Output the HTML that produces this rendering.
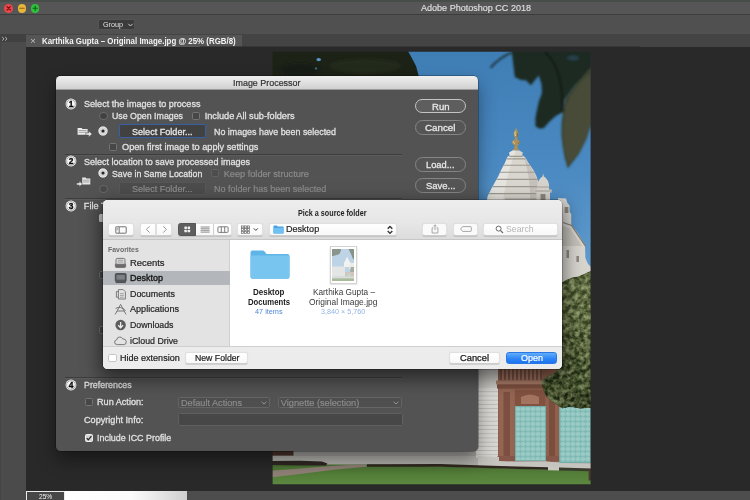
<!DOCTYPE html>
<html><head><meta charset="utf-8"><title>Adobe Photoshop CC 2018</title>
<style>
html,body{margin:0;padding:0;}
body{width:750px;height:500px;overflow:hidden;background:#292929;position:relative;font-family:"Liberation Sans", sans-serif;}
#root{position:absolute;left:0;top:0;width:750px;height:500px;overflow:hidden;}
#root div,#root span.t,#root svg{position:absolute;box-sizing:border-box;}
span.t{white-space:nowrap;transform-origin:0 50%;font-family:"Liberation Sans", sans-serif;}
#root{will-change:transform;}

</style></head><body><div id="root">
<div style="left:0px;top:0px;width:750px;height:2px;background:#474e4a;"></div>
<div style="left:0px;top:2px;width:750px;height:12px;background:#565656;"></div>
<div style="left:0px;top:14px;width:750px;height:1px;background:#3d3d3d;"></div>
<div style="left:0px;top:15px;width:750px;height:19px;background:#505050;"></div>
<div style="left:0px;top:34px;width:750px;height:12.5px;background:#444444;"></div>
<div style="left:4.3999999999999995px;top:4.000000000000001px;width:8.6px;height:8.6px;border-radius:50%;background:#e8484a;"></div>
<div style="left:17.7px;top:4.000000000000001px;width:8.6px;height:8.6px;border-radius:50%;background:#e6b53a;"></div>
<div style="left:30.900000000000002px;top:4.000000000000001px;width:8.6px;height:8.6px;border-radius:50%;background:#2fc23c;"></div>
<svg style="left:0;top:0" width="45" height="14" viewBox="0 0 45 14"><g stroke-linecap="round" fill="none" stroke-width="1.1"><path d="M7,6.6 L10.4,10 M10.4,6.6 L7,10" stroke="#7a0c10"/><path d="M19.8,8.3 H24.2" stroke="#8a6410"/><path d="M33,8.3 H37.4 M35.2,6.1 V10.5" stroke="#0d6412"/></g></svg>
<span class="t" style="left:420.70px;top:2.22px;font-size:9.5px;line-height:12px;color:#dedede;font-weight:400;transform:scaleX(0.9510);-webkit-text-stroke:0.2px #dedede;">Adobe Photoshop CC 2018</span>
<div style="left:97.8px;top:19.4px;width:37.2px;height:10.8px;background:#3b3b3b;border:1px solid #555;border-radius:2px;"></div>
<span class="t" style="left:102.80px;top:20.40px;font-size:7.5px;line-height:9px;color:#e2e2e2;font-weight:400;transform:scaleX(0.9588);">Group</span>
<svg style="left:127px;top:22px" width="7" height="6" viewBox="0 0 7 6"><path d="M1.3,1.8 L3.5,4 L5.7,1.8" stroke="#dcdcdc" stroke-width="0.9" fill="none"/></svg>
<div style="left:0px;top:34px;width:25.7px;height:466px;background:#4b4b4b;"></div>
<div style="left:0px;top:34px;width:25.7px;height:7.8px;background:#404040;"></div>
<div style="left:0px;top:34px;width:1px;height:466px;background:#444;"></div>
<svg style="left:1px;top:35.5px" width="8" height="6" viewBox="0 0 8 6"><path d="M1.2,1 L3,2.8 L1.2,4.6 M4.2,1 L6,2.8 L4.2,4.6" fill="none" stroke="#c6c6c6" stroke-width="0.9"/></svg>
<div style="left:25.7px;top:34.5px;width:216.3px;height:12px;background:#555555;"></div>
<span class="t" style="left:30.30px;top:34.72px;font-size:9.5px;line-height:12px;color:#c4c4c4;font-weight:400;">×</span>
<span class="t" style="left:42.00px;top:34.52px;font-size:9.4px;line-height:12px;color:#f4f4f4;font-weight:700;transform:scaleX(0.8421);">Karthika Gupta – Original Image.jpg @ 25% (RGB/8)</span>

<svg style="left:0;top:0" width="750" height="500" viewBox="0 0 750 500">
<defs>
<clipPath id="pc"><rect x="272.5" y="51.7" width="318" height="432.6"/></clipPath>
<linearGradient id="sky" x1="0" y1="52" x2="0" y2="280" gradientUnits="userSpaceOnUse">
 <stop offset="0" stop-color="#3f7db5"/><stop offset="0.5" stop-color="#4a89c1"/><stop offset="1" stop-color="#629dcf"/></linearGradient>
<linearGradient id="lawn" x1="0" y1="465" x2="0" y2="485" gradientUnits="userSpaceOnUse">
 <stop offset="0" stop-color="#4a7032"/><stop offset="0.5" stop-color="#55803a"/><stop offset="1" stop-color="#5c8840"/></linearGradient>
<filter id="b1" x="-10%" y="-10%" width="120%" height="120%"><feGaussianBlur stdDeviation="0.7"/></filter>
<filter id="bL" x="-10%" y="-10%" width="120%" height="120%"><feGaussianBlur stdDeviation="1.25"/></filter>
<filter id="leafy" x="-5%" y="-5%" width="110%" height="110%" color-interpolation-filters="sRGB">
 <feTurbulence type="fractalNoise" baseFrequency="0.2" numOctaves="3" seed="11" result="n"/>
 <feColorMatrix in="n" type="matrix" values="2.3 0 0 0 -0.72  2.3 0 0 0 -0.72  1.9 0 0 0 -0.62  0 0 0 0 1" result="g"/>
 <feComposite in="SourceGraphic" in2="g" operator="arithmetic" k1="0" k2="0.85" k3="0.36" k4="-0.07" result="m"/>
 <feComposite in="m" in2="SourceGraphic" operator="in" result="c"/>
 <feGaussianBlur in="c" stdDeviation="0.6"/>
</filter>
<filter id="b2" x="-10%" y="-10%" width="120%" height="120%"><feGaussianBlur stdDeviation="1.6"/></filter>
<pattern id="teal" x="515.5" y="406.5" width="5" height="5" patternUnits="userSpaceOnUse">
 <rect width="5" height="5" fill="#7fb9b4"/><circle cx="2.5" cy="2.5" r="1.8" fill="#bfe2dd"/><circle cx="2.5" cy="2.5" r="0.9" fill="#74aea9"/></pattern>
<pattern id="wall" x="478" y="388" width="4" height="4.2" patternUnits="userSpaceOnUse">
 <rect width="4" height="4.2" fill="#d9d7d3"/><rect y="3.3" width="4" height="0.9" fill="#bcb9b4"/></pattern>
</defs>
<g>
 <rect x="272" y="51" width="320" height="434" fill="url(#sky)"/>
 <!-- top-left dark foliage -->
 <g filter="url(#b1)">
 <path d="M262,47 L405.5,47 Q411,56 416,66 Q420,78 421,90 Q421,110 414,130 L262,140 Z" fill="#1b2119"/>
 </g>
 <g filter="url(#b2)"><ellipse cx="365" cy="66" rx="36" ry="7" fill="#232a1b"/><ellipse cx="300" cy="70" rx="20" ry="6" fill="#161b15"/></g>
 <g filter="url(#b1)"><ellipse cx="318.7" cy="59.6" rx="2.3" ry="1.6" fill="#5a95c8"/><ellipse cx="316" cy="68.4" rx="1.2" ry="1.2" fill="#41627a"/></g>
 <!-- temple -->
 <g filter="url(#b1)">
  <path d="M516,127.8 Q516.9,129.6 517.6,131 Q518.9,133 518.2,135.2 Q517.6,137 517,138.2 Q517,139.4 518.2,139.9 Q520.3,140.6 520.1,142.4 Q519.9,144.3 517.9,144.9 Q517.3,145.6 517.5,146.8 Q518,149 519.6,150.6 L512.4,150.6 Q514,149 514.5,146.8 Q514.7,145.6 514.1,144.9 Q512.1,144.3 511.9,142.4 Q511.7,140.6 513.8,139.9 Q515,139.4 515,138.2 Q514.4,137 513.8,135.2 Q513.1,133 514.4,131 Q515.1,129.6 516,127.8 Z" fill="#a8915a"/>
  <path d="M515.3,131.5 Q514.6,133.6 515.4,136 M513.6,141.4 Q513.4,142.8 514.6,143.6" stroke="#e3d6a2" stroke-width="1" fill="none"/>
  <path d="M517.6,133 Q517.8,135 517,137 M519,141.5 Q519.2,143 518,144" stroke="#6e5a30" stroke-width="0.8" fill="none" opacity="0.8"/>
  <path d="M512.6,150.4 L519.4,150.4 L522.8,152.6 L522.2,155.6 L525,157 L528.6,163 L533.4,170 L536.4,176 L538.6,183 L539.6,190 L540.4,196 L540.6,202 L486.6,202 L487.8,196 L490.8,190 L494.6,183 L498.5,176 L501.2,170 L504.9,163 L507.4,157 L509.8,155.6 L509.2,152.6 Z" fill="#d9d6cf"/>
  <path d="M512.6,150.4 L509.2,152.6 L509.8,155.6 L507.4,157 L504.9,163 L501.2,170 L498.5,176 L494.6,183 L490.8,190 L487.8,196 L486.6,202 L503,202 Q506,176 516,150.4Z" fill="#eeece7" opacity="0.6"/>
  <path d="M528,163 L532.4,170 L535.6,176 L537.9,183 L538.8,190 L539.8,196 L540,202 L530,202 Q531,180 524,157Z" fill="#b7b3ab" opacity="0.55"/>
  <path d="M509.4,156.3 H522.6 M506.5,158.8 H525.6 M503.3,165.2 H530 M499.8,172.2 H534.4 M496.4,179.4 H537.4 M492.8,186.6 H539 M489.3,193.6 H540" stroke="#9d9990" stroke-width="1.15" fill="none"/>
  <path d="M505,199 H538" stroke="#8f8b83" stroke-width="1" fill="none" opacity="0.7"/>
  <path d="M543.2,173.6 L543.9,176.4 Q547.6,178.6 548.8,183.6 Q549.4,186.6 549,189.4 L551.6,189.4 L551.6,192.4 L550,192.4 L550,202 L536.4,202 L536.4,192.4 L534.8,192.4 L534.8,189.4 L537.4,189.4 Q537,186.6 537.6,183.6 Q538.8,178.6 542.5,176.4 Z" fill="#d6d3cc"/><path d="M537.6,187 H549 M535,191 H551.4" stroke="#9d9990" stroke-width="0.9"/>
  <rect x="540.5" y="194" width="5" height="7" fill="#8c8880"/>
 </g>
 <!-- right leaves -->
 <g filter="url(#bL)">
  <path d="M490.5,67.8 Q499,58 511.6,52.5" stroke="#1c2a22" stroke-width="1.6" fill="none"/>
  <path d="M511.6,50 L513,62 L514.8,77 L521,80 L526,80.2 L530.8,85.2 L535,80 L538.8,75.4 L541.5,84 L542,93 L539,101 L537.2,109 L535.4,118 L535.6,126.6 L539.5,128.6 L543.6,128.2 L550,121 L556.4,115.4 L562.9,112.2 L564,100 L575,85 L592,70 L592,50 Z" fill="#1d2a21"/>
  <path d="M562.9,112.2 L561.6,123 L561.3,134.6 L562.6,146 L564.5,157 L567.7,168.5 L573.5,161 L578.9,153.9 L583,146 L586.9,137.9 L589,131 L592,124 L592,66 L576,84 L565,99 Z" fill="#3b4331"/>
  <path d="M566,106 Q572,92 583,80 L592,72 L592,120 L587,136 L579,152 L568.5,165 L564.5,150 L563,130 Z" fill="#4a4f3a" opacity="0.8"/>
  <path d="M545,52 Q556,62 560,80 Q563,95 562.5,112" stroke="#111a14" stroke-width="2.5" fill="none" opacity="0.7"/>
  <ellipse cx="573" cy="58" rx="6" ry="2.5" fill="#2b4a5e" opacity="0.7"/>
 </g>
 <!-- right strip behind picker: palace + tree -->
 <g filter="url(#b1)">
  <path d="M558,198 L566,198.5 L567.4,203 L569.6,205.5 L569.6,212 L571.2,214 L571.2,225 L578,233.5 L585,245 L585.4,258 L588,264 L592,268 L592,284 L558,284 Z" fill="#d8d5cf"/>
  <path d="M563,222.5 L571.5,225.5 L585.6,246.3" stroke="#857e72" stroke-width="1.3" fill="none"/>
  <path d="M562,226 L570,228 L582,246 L562,246Z" fill="#bdb9b1" opacity="0.7"/>
  <path d="M564.6,207 H568.4 V213 H564.6Z M576.4,256 H579 V262 H576.4Z M566.5,250 H569 V258 H566.5Z" fill="#8c887f"/>
  
 </g>
 <!-- pavement base -->
 <path d="M268,449 L592,449 L592,470 L268,470Z" fill="#b3b2ae"/>
 <path d="M268,451 L478,451 L478,456 L268,456Z" fill="#a4a3a0"/>
 <!-- lower building -->
 <rect x="476" y="366" width="24" height="24" fill="#cfcdc9"/>
 <rect x="476" y="388" width="23" height="69.5" fill="url(#wall)"/>
 <g filter="url(#b1)">
  <rect x="498" y="366" width="62" height="96" fill="#8d5f4c"/>
  <rect x="500" y="368" width="42" height="12" fill="#7a5040"/>
  <path d="M503,368 V380 M507,368 V380 M511,368 V380 M515,368 V380 M519,368 V380 M523,368 V380 M527,368 V380 M531,368 V380 M535,368 V380 M539,368 V380" stroke="#b08a78" stroke-width="1.2"/>
  <rect x="496" y="380.5" width="50" height="4" fill="#a87a66"/>
  <rect x="497" y="384.5" width="48" height="4" fill="#7c4f3f"/>
  <rect x="514.5" y="390" width="31" height="16.5" fill="#82513f"/>
  <path d="M521,397 Q530,392 539,397 L539,404 L521,404Z" fill="#a37560"/>
  <rect x="499" y="389" width="15.7" height="71" fill="#946552"/>
  <rect x="503.5" y="392" width="6.5" height="64" fill="#7d5040"/>
  <rect x="545.4" y="389" width="13.5" height="71" fill="#8f604d"/>
  <rect x="549" y="392" width="6" height="64" fill="#7a4e3e"/>
  <rect x="497.5" y="456" width="18" height="5" fill="#86574a"/>
  <rect x="544" y="456" width="16" height="5" fill="#86574a"/>
 </g>
 <rect x="515.5" y="406.5" width="30" height="54.3" fill="url(#teal)"/>
 <rect x="515.5" y="406.5" width="30" height="54.3" fill="none" stroke="#74aeaa" stroke-width="1"/>
 <rect x="559.7" y="407" width="31" height="55.5" fill="url(#teal)"/>
 <rect x="559.7" y="407" width="31" height="55.5" fill="none" stroke="#74aeaa" stroke-width="1"/>
 <!-- tree -->
 <g filter="url(#leafy)">
  <path d="M556,288 L561,283 L566,280 L572,277.5 L578,276.5 L584,274 L588,272 L594,270 L594,372 L556,372 Z" fill="#56643f"/>
  <path d="M556,330 L594,330 L594,372 L556,372Z" fill="#4a5836"/>
  <path d="M562,358 L556,372 L548,376 L541,381 L543,389 L546,396 L551,401 L557,405 L562,408.5 L570,406.5 L580,408.5 L594,407.5 L594,358Z" fill="#3c4a2c"/>
  <path d="M556,392 L562,408.5 L570,406.5 L580,408.5 L594,407.5 L594,392Z" fill="#303c24"/>
 </g>
 <!-- pavement + lawn -->
 <path d="M478,456 L499,457 L499,461 L516,461.6 L545.6,461.2 L560,463 L592,464 L592,470 L478,466Z" fill="#c6c4be"/>
 <!-- lawn -->
 <path d="M268,465 L320,464.6 L367,464.6 L440,466.6 L548,469.6 L592,471 L592,486 L268,486Z" fill="url(#lawn)"/>
 <!-- left hedge, path, right hedge -->
 <path d="M268,461 L300,460.8 L322,461.6 L327.4,463.4 L326,465.6 L300,465.4 L268,465Z" fill="#2f2722"/>
 <path d="M268,471 L300,468.4 L330,466 L365,464.3 L367,466.8 L336,469.6 L300,474 L268,477.8Z" fill="#8f8076"/>
 <path d="M367,464.2 L440,464 L500,466 L548,467.2 L548,469.8 L500,468.6 L440,466.7 L367,466.8Z" fill="#30291f"/>
 <path d="M548,466.6 L559,467 L559,470.6 L548,470.2Z" fill="#c9c8c0"/>
 <path d="M559,467.6 L592,468.6 L592,471.2 L559,470.4Z" fill="#3a3a2c"/>
 <rect x="272" y="451" width="21.5" height="4.6" fill="#4b332b"/>
 <rect x="588.6" y="469.5" width="3" height="11" fill="#4a3c30"/>
</g>
<path d="M200,46.5 H640 V490.5 H200Z M272.6,51.7 V484.3 H590.6 V51.7Z" fill="#292929" fill-rule="evenodd"/>
</svg>
<div style="left:25.7px;top:490.5px;width:725px;height:10px;background:#4d4d4d;"></div>
<div style="left:64px;top:490.5px;width:122.7px;height:10px;background:linear-gradient(90deg,#ffffff 0%,#fbfbfb 55%,#cfcfcf 100%);"></div>
<div style="left:26px;top:491px;width:38.5px;height:10px;background:#474747;border:1px solid #ececec;"></div>
<span class="t" style="left:39.00px;top:491.61px;font-size:7.2px;line-height:9px;color:#f4f4f4;font-weight:400;transform:scaleX(0.9173);">25%</span>
<div style="left:55.6px;top:76px;width:422.2px;height:375px;background:#535353;border-radius:4.5px;box-shadow:0 9px 18px 0px rgba(0,0,0,0.42),0 0 0 0.5px rgba(0,0,0,0.5);"></div>
<div style="left:55.6px;top:76px;width:422.2px;height:13.8px;background:linear-gradient(#efefef,#e2e2e2 45%,#d0d0d0);border-radius:4.5px 4.5px 0 0;border-bottom:1px solid #9a9a9a;"></div>
<span class="t" style="left:233.05px;top:77.23px;font-size:9.2px;line-height:12px;color:#303030;font-weight:400;transform:scaleX(0.9719);-webkit-text-stroke:0.2px #303030;">Image Processor</span>
<svg style="left:64.8px;top:97.7px" width="12" height="12" viewBox="0 0 12 12"><circle cx="6" cy="6" r="5.4" fill="#fafafa"/><circle cx="6" cy="6" r="4.35" fill="none" stroke="#444" stroke-width="0.45"/><text x="6.05" y="8.95" text-anchor="middle" font-family="Liberation Sans" font-weight="700" font-size="8.4" fill="#0c0c0c" stroke="#0c0c0c" stroke-width="0.35">1</text></svg>
<span class="t" style="left:83.80px;top:98.03px;font-size:9.2px;line-height:12px;color:#e2e2e2;font-weight:400;transform:scaleX(0.9875);-webkit-text-stroke:0.28px #e2e2e2;">Select the images to process</span>
<div style="left:99.10000000000001px;top:111.5px;width:8.6px;height:8.6px;border-radius:50%;background:#414141;border:1px solid #6c6c6c;"></div>
<span class="t" style="left:112.20px;top:109.93px;font-size:9.2px;line-height:12px;color:#e2e2e2;font-weight:400;transform:scaleX(0.9586);-webkit-text-stroke:0.28px #e2e2e2;">Use Open Images</span>
<div style="left:191.5px;top:111.8px;width:8px;height:8px;border-radius:1.5px;background:#474747;border:1px solid #747474;"></div>
<span class="t" style="left:204.70px;top:109.93px;font-size:9.2px;line-height:12px;color:#e2e2e2;font-weight:400;-webkit-text-stroke:0.28px #e2e2e2;">Include All sub-folders</span>
<svg style="left:76.5px;top:126.6px" width="16" height="10" viewBox="0 0 16 10"><path d="M0.6,0.9 H4.6 L5.5,1.9 H10.6 V7.8 H0.6Z" fill="#ececec"/><path d="M1.5,3.5 H9.7 M1.5,5.3 H9.7" stroke="#6a6a6a" stroke-width="0.55"/><path d="M8.8,5.9 H11.6 V4.1 L15.2,7 L11.6,9.9 V8.1 H8.8Z" fill="#ececec" stroke="#535353" stroke-width="0.55"/></svg>
<svg style="left:97.4px;top:125.19999999999999px" width="12" height="12" viewBox="0 0 12 12"><circle cx="6" cy="6" r="4.5" fill="#d4d4d4"/><circle cx="6" cy="6" r="4.1" fill="none" stroke="#ececec" stroke-width="0.7"/><circle cx="6" cy="6" r="1.55" fill="#242424"/></svg>
<div style="left:119px;top:124px;width:87.2px;height:14.4px;background:#414141;border:1px solid #3a5f9c;border-radius:2px;box-shadow:0 0 0 0.5px rgba(50,90,150,0.4);"></div>
<span class="t" style="left:132.45px;top:125.83px;font-size:9.2px;line-height:12px;color:#f0f0f0;font-weight:400;transform:scaleX(0.9873);-webkit-text-stroke:0.28px #e2e2e2;">Select Folder...</span>
<span class="t" style="left:214.00px;top:125.53px;font-size:9.2px;line-height:12px;color:#e2e2e2;font-weight:400;transform:scaleX(0.9671);-webkit-text-stroke:0.28px #e2e2e2;">No images have been selected</span>
<div style="left:109.4px;top:143.2px;width:8px;height:8px;border-radius:1.5px;background:#474747;border:1px solid #747474;"></div>
<span class="t" style="left:122.00px;top:140.73px;font-size:9.2px;line-height:12px;color:#e2e2e2;font-weight:400;-webkit-text-stroke:0.28px #e2e2e2;">Open first image to apply settings</span>
<div style="left:65px;top:153.5px;width:337.3px;height:1px;background:#3d3d3d;"></div>
<div style="left:65px;top:154.5px;width:337.3px;height:0.6px;background:#5c5c5c;"></div>
<svg style="left:64.8px;top:155.3px" width="12" height="12" viewBox="0 0 12 12"><circle cx="6" cy="6" r="5.4" fill="#fafafa"/><circle cx="6" cy="6" r="4.35" fill="none" stroke="#444" stroke-width="0.45"/><text x="6.05" y="8.95" text-anchor="middle" font-family="Liberation Sans" font-weight="700" font-size="8.4" fill="#0c0c0c" stroke="#0c0c0c" stroke-width="0.35">2</text></svg>
<span class="t" style="left:83.80px;top:155.73px;font-size:9.2px;line-height:12px;color:#e2e2e2;font-weight:400;transform:scaleX(0.9820);-webkit-text-stroke:0.28px #e2e2e2;">Select location to save processed images</span>
<svg style="left:97.4px;top:167.4px" width="12" height="12" viewBox="0 0 12 12"><circle cx="6" cy="6" r="4.5" fill="#d4d4d4"/><circle cx="6" cy="6" r="4.1" fill="none" stroke="#ececec" stroke-width="0.7"/><circle cx="6" cy="6" r="1.55" fill="#242424"/></svg>
<span class="t" style="left:112.20px;top:167.53px;font-size:9.2px;line-height:12px;color:#e2e2e2;font-weight:400;transform:scaleX(0.9556);-webkit-text-stroke:0.28px #e2e2e2;">Save in Same Location</span>
<div style="left:210.9px;top:169.4px;width:8px;height:8px;border-radius:1.5px;background:#4d4d4d;border:1px solid #626262;"></div>
<span class="t" style="left:223.70px;top:167.63px;font-size:9.2px;line-height:12px;color:#8b8b8b;font-weight:400;-webkit-text-stroke:0.2px #8b8b8b;">Keep folder structure</span>
<svg style="left:75.5px;top:177.2px" width="15" height="10" viewBox="0 0 15 10"><path d="M6.2,0.6 H9.6 L10.4,1.6 H14.3 V7.6 H6.2Z" fill="#e8e8e8"/><path d="M7,3.2 H13.5 M7,5 H13.5" stroke="#6a6a6a" stroke-width="0.55"/><path d="M0.8,5.9 H3.3 V4.3 L6.5,6.9 L3.3,9.5 V7.9 H0.8Z" fill="#e8e8e8" stroke="#535353" stroke-width="0.4"/></svg>
<div style="left:99.10000000000001px;top:184.5px;width:8.6px;height:8.6px;border-radius:50%;background:#494949;border:1px solid #686868;"></div>
<div style="left:119px;top:182.4px;width:87.2px;height:12.8px;background:#4c4c4c;border:1px solid #575757;border-radius:2px;"></div>
<span class="t" style="left:132.45px;top:182.93px;font-size:9.2px;line-height:12px;color:#8e8e8e;font-weight:400;transform:scaleX(0.9873);-webkit-text-stroke:0.2px #8b8b8b;">Select Folder...</span>
<span class="t" style="left:214.00px;top:182.93px;font-size:9.2px;line-height:12px;color:#8b8b8b;font-weight:400;transform:scaleX(0.9823);-webkit-text-stroke:0.2px #8b8b8b;">No folder has been selected</span>
<div style="left:65px;top:197.5px;width:337.3px;height:1px;background:#3d3d3d;"></div>
<div style="left:65px;top:198.5px;width:337.3px;height:0.6px;background:#5c5c5c;"></div>
<svg style="left:64.8px;top:199.7px" width="12" height="12" viewBox="0 0 12 12"><circle cx="6" cy="6" r="5.4" fill="#fafafa"/><circle cx="6" cy="6" r="4.35" fill="none" stroke="#444" stroke-width="0.45"/><text x="6.05" y="8.95" text-anchor="middle" font-family="Liberation Sans" font-weight="700" font-size="8.4" fill="#0c0c0c" stroke="#0c0c0c" stroke-width="0.35">3</text></svg>
<span class="t" style="left:83.80px;top:199.63px;font-size:9.2px;line-height:12px;color:#e2e2e2;font-weight:400;-webkit-text-stroke:0.28px #e2e2e2;">File Type</span>
<div style="left:98.5px;top:213.6px;width:8px;height:8px;background:#cfcfcf;border-radius:1.5px;"></div>
<div style="left:98.5px;top:270.5px;width:8px;height:8px;border-radius:1.5px;background:#474747;border:1px solid #747474;"></div>
<div style="left:98.5px;top:325.5px;width:8px;height:8px;border-radius:1.5px;background:#474747;border:1px solid #747474;"></div>
<div style="left:65px;top:377.3px;width:337.3px;height:1px;background:#3d3d3d;"></div>
<div style="left:65px;top:378.3px;width:337.3px;height:0.6px;background:#5c5c5c;"></div>
<svg style="left:64.8px;top:379px" width="12" height="12" viewBox="0 0 12 12"><circle cx="6" cy="6" r="5.4" fill="#fafafa"/><circle cx="6" cy="6" r="4.35" fill="none" stroke="#444" stroke-width="0.45"/><text x="6.05" y="8.95" text-anchor="middle" font-family="Liberation Sans" font-weight="700" font-size="8.4" fill="#0c0c0c" stroke="#0c0c0c" stroke-width="0.35">4</text></svg>
<span class="t" style="left:84.00px;top:379.03px;font-size:9.2px;line-height:12px;color:#d2d2d2;font-weight:400;transform:scaleX(0.9627);-webkit-text-stroke:0.28px #e2e2e2;">Preferences</span>
<div style="left:85px;top:398.3px;width:8px;height:8px;border-radius:1.5px;background:#474747;border:1px solid #747474;"></div>
<span class="t" style="left:96.80px;top:396.43px;font-size:9.2px;line-height:12px;color:#e2e2e2;font-weight:400;transform:scaleX(0.9915);-webkit-text-stroke:0.28px #e2e2e2;">Run Action:</span>
<div style="left:177.7px;top:396.6px;width:92.4px;height:11.8px;background:#4f4f4f;border:1px solid #656565;border-radius:1.5px;"></div>
<span class="t" style="left:180.80px;top:396.53px;font-size:9.2px;line-height:12px;color:#8b8b8b;font-weight:400;transform:scaleX(0.9952);-webkit-text-stroke:0.2px #8b8b8b;">Default Actions</span>
<svg style="left:260px;top:399.5px" width="8" height="6" viewBox="0 0 8 6"><path d="M1.6,1.7 L4,4.1 L6.4,1.7" stroke="#9a9a9a" stroke-width="0.9" fill="none"/></svg>
<div style="left:277.7px;top:396.6px;width:124.2px;height:11.8px;background:#4f4f4f;border:1px solid #656565;border-radius:1.5px;"></div>
<span class="t" style="left:280.80px;top:396.53px;font-size:9.2px;line-height:12px;color:#8b8b8b;font-weight:400;-webkit-text-stroke:0.2px #8b8b8b;">Vignette (selection)</span>
<svg style="left:392px;top:399.5px" width="8" height="6" viewBox="0 0 8 6"><path d="M1.6,1.7 L4,4.1 L6.4,1.7" stroke="#9a9a9a" stroke-width="0.9" fill="none"/></svg>
<span class="t" style="left:84.00px;top:414.03px;font-size:9.2px;line-height:12px;color:#e2e2e2;font-weight:400;transform:scaleX(0.9922);-webkit-text-stroke:0.28px #e2e2e2;">Copyright Info:</span>
<div style="left:177.7px;top:413.2px;width:225px;height:12.6px;background:#474747;border:1px solid #5f5f5f;border-radius:1.5px;"></div>
<div style="left:85px;top:433.7px;width:8px;height:8px;border-radius:1.5px;background:#d4d4d4;border:0.8px solid #efefef;"></div>
<svg style="left:85px;top:433.7px" width="8" height="8" viewBox="0 0 8 8"><path d="M1.7,4.1 L3.3,5.8 L6.4,2.1" stroke="#262626" stroke-width="1.3" fill="none"/></svg>
<span class="t" style="left:96.80px;top:431.83px;font-size:9.2px;line-height:12px;color:#e2e2e2;font-weight:400;transform:scaleX(0.9699);-webkit-text-stroke:0.28px #e2e2e2;">Include ICC Profile</span>
<div style="left:415.3px;top:98.6px;width:50.4px;height:14.8px;border-radius:7.4px;border:1px solid #c4c4c4;background:#5e5e5e;"></div>
<span class="t" style="left:431.75px;top:100.93px;font-size:9.2px;line-height:12px;color:#f0f0f0;font-weight:400;transform:scaleX(1.0380);-webkit-text-stroke:0.28px #e2e2e2;">Run</span>
<div style="left:415.3px;top:119.8px;width:50.4px;height:14.8px;border-radius:7.4px;border:1px solid #858585;background:#555555;"></div>
<span class="t" style="left:425.25px;top:122.13px;font-size:9.2px;line-height:12px;color:#f0f0f0;font-weight:400;transform:scaleX(1.0661);-webkit-text-stroke:0.28px #e2e2e2;">Cancel</span>
<div style="left:415.3px;top:157.1px;width:50.4px;height:14.8px;border-radius:7.4px;border:1px solid #858585;background:#555555;"></div>
<span class="t" style="left:426.25px;top:159.43px;font-size:9.2px;line-height:12px;color:#f0f0f0;font-weight:400;transform:scaleX(1.0139);-webkit-text-stroke:0.28px #e2e2e2;">Load...</span>
<div style="left:415.3px;top:177.8px;width:50.4px;height:14.8px;border-radius:7.4px;border:1px solid #858585;background:#555555;"></div>
<span class="t" style="left:425.75px;top:180.13px;font-size:9.2px;line-height:12px;color:#f0f0f0;font-weight:400;transform:scaleX(1.0311);-webkit-text-stroke:0.28px #e2e2e2;">Save...</span>
<div style="left:102.7px;top:200px;width:459.3px;height:168.8px;background:#ececec;border-radius:4.5px;box-shadow:0 7px 18px 3px rgba(0,0,0,0.5),0 0 0 0.5px rgba(0,0,0,0.4);"></div>
<div style="left:102.7px;top:200px;width:459.3px;height:39.5px;background:linear-gradient(#ededed,#e6e6e6 60%,#dcdcdc);border-radius:4.5px 4.5px 0 0;border-bottom:1px solid #c6c6c6;"></div>
<span class="t" style="left:298.15px;top:208.26px;font-size:8.4px;line-height:11px;color:#1e1e1e;font-weight:700;transform:scaleX(0.8605);">Pick a source folder</span>
<div style="left:107.5px;top:222.8px;width:26.5px;height:12.8px;background:linear-gradient(#ffffff,#f8f8f8);border:0.8px solid #e0e0e0;border-bottom-color:#cdcdcd;border-radius:2.8px;box-shadow:0 0.5px 0.8px rgba(0,0,0,0.12);"></div>
<svg style="left:115px;top:225.5px" width="12" height="8" viewBox="0 0 12 8"><rect x="0.8" y="0.8" width="10.4" height="6.4" rx="0.4" fill="none" stroke="#6a6a6a" stroke-width="0.95"/><path d="M4.2,1 V7" stroke="#6a6a6a" stroke-width="0.9"/><path d="M1.7,2.4 H3.3 M1.7,3.7 H3.3" stroke="#6a6a6a" stroke-width="0.6"/></svg>
<div style="left:139.6px;top:222.8px;width:16.3px;height:12.8px;background:linear-gradient(#ffffff,#f8f8f8);border:0.8px solid #e0e0e0;border-bottom-color:#cdcdcd;border-radius:2.8px;box-shadow:0 0.5px 0.8px rgba(0,0,0,0.12);border-radius:2.6px 0 0 2.6px;"></div>
<div style="left:156.2px;top:222.8px;width:16.3px;height:12.8px;background:linear-gradient(#ffffff,#f8f8f8);border:0.8px solid #e0e0e0;border-bottom-color:#cdcdcd;border-radius:2.8px;box-shadow:0 0.5px 0.8px rgba(0,0,0,0.12);border-radius:0 2.6px 2.6px 0;"></div>
<svg style="left:139.6px;top:222.8px" width="33" height="13" viewBox="0 0 33 13"><path d="M9.6,3.2 L6.4,6.4 L9.6,9.6 M23.2,3.2 L26.4,6.4 L23.2,9.6" fill="none" stroke="#8c8c8c" stroke-width="0.9"/></svg>
<div style="left:177.5px;top:222.8px;width:54px;height:12.8px;background:linear-gradient(#ffffff,#f8f8f8);border:0.8px solid #e0e0e0;border-bottom-color:#cdcdcd;border-radius:2.8px;box-shadow:0 0.5px 0.8px rgba(0,0,0,0.12);"></div>
<div style="left:177.5px;top:222.8px;width:18.2px;height:12.8px;background:#5f5f5f;border-radius:2.6px 0 0 2.6px;border:0.8px solid #575757;"></div>
<div style="left:213.3px;top:223.6px;width:0.7px;height:11.2px;background:#d0d0d0;"></div>
<svg style="left:177.5px;top:222.8px" width="54" height="13" viewBox="0 0 54 13"><g fill="#f2f2f2"><rect x="6.4" y="3.6" width="2.5" height="2.5" rx="0.5"/><rect x="9.6" y="3.6" width="2.5" height="2.5" rx="0.5"/><rect x="6.4" y="6.8" width="2.5" height="2.5" rx="0.5"/><rect x="9.6" y="6.8" width="2.5" height="2.5" rx="0.5"/></g><g fill="#a6a6a6"><rect x="22.6" y="3.4" width="9" height="1.3"/><rect x="22.6" y="5.1" width="9" height="1.3"/><rect x="22.6" y="6.8" width="9" height="1.3"/><rect x="22.6" y="8.5" width="9" height="1.3"/></g><rect x="39.9" y="3.8" width="10.2" height="5.6" rx="0.9" fill="none" stroke="#707070" stroke-width="0.9"/><path d="M43.3,3.8 V9.4 M46.7,3.8 V9.4" stroke="#707070" stroke-width="0.9"/></svg>
<div style="left:237.3px;top:222.8px;width:26px;height:12.8px;background:linear-gradient(#ffffff,#f8f8f8);border:0.8px solid #e0e0e0;border-bottom-color:#cdcdcd;border-radius:2.8px;box-shadow:0 0.5px 0.8px rgba(0,0,0,0.12);"></div>
<svg style="left:237.3px;top:222.8px" width="26" height="13" viewBox="0 0 26 13"><g fill="none" stroke="#6a6a6a" stroke-width="0.7"><rect x="4.6" y="2.9" width="2" height="2"/><rect x="7.5" y="2.9" width="2" height="2"/><rect x="10.4" y="2.9" width="2" height="2"/><rect x="4.6" y="5.6" width="2" height="2"/><rect x="7.5" y="5.6" width="2" height="2"/><rect x="10.4" y="5.6" width="2" height="2"/><rect x="4.6" y="8.3" width="2" height="2"/><rect x="7.5" y="8.3" width="2" height="2"/><rect x="10.4" y="8.3" width="2" height="2"/></g><path d="M16.8,5.4 L18.8,7.4 L20.8,5.4" fill="none" stroke="#3c3c3c" stroke-width="1"/></svg>
<div style="left:269.2px;top:222.8px;width:127.6px;height:12.8px;background:linear-gradient(#ffffff,#f8f8f8);border:0.8px solid #e0e0e0;border-bottom-color:#cdcdcd;border-radius:2.8px;box-shadow:0 0.5px 0.8px rgba(0,0,0,0.12);"></div>
<svg style="left:273px;top:225px" width="11" height="9" viewBox="0 0 11 9"><path d="M0.4,1.2 Q0.4,0.5 1.1,0.5 H3.8 L4.8,1.6 H9.9 Q10.6,1.6 10.6,2.3 V7.8 Q10.6,8.5 9.9,8.5 H1.1 Q0.4,8.5 0.4,7.8Z" fill="#4ba3e6"/><path d="M0.4,3 H10.6 V7.8 Q10.6,8.5 9.9,8.5 H1.1 Q0.4,8.5 0.4,7.8Z" fill="#6fc0f3"/></svg>
<span class="t" style="left:286.20px;top:223.42px;font-size:9.4px;line-height:12px;color:#262626;font-weight:400;transform:scaleX(0.9649);-webkit-text-stroke:0.2px #262626;">Desktop</span>
<svg style="left:386px;top:224.6px" width="8" height="10" viewBox="0 0 8 10"><path d="M1.7,3.7 L4,1.4 L6.3,3.7 M1.7,6.1 L4,8.4 L6.3,6.1" fill="none" stroke="#303030" stroke-width="1.35"/></svg>
<div style="left:422.4px;top:222.8px;width:24.4px;height:12.8px;background:linear-gradient(#ffffff,#f8f8f8);border:0.8px solid #e0e0e0;border-bottom-color:#cdcdcd;border-radius:2.8px;box-shadow:0 0.5px 0.8px rgba(0,0,0,0.12);background:#fafafa;"></div>
<svg style="left:430px;top:224.3px" width="10" height="10" viewBox="0 0 10 10"><path d="M3.4,3.9 H2.1 V9 H7.9 V3.9 H6.6 M5,6.2 V0.9 M3.5,2.3 L5,0.8 L6.5,2.3" fill="none" stroke="#a2a2a2" stroke-width="0.95"/></svg>
<div style="left:452.7px;top:222.8px;width:25px;height:12.8px;background:linear-gradient(#ffffff,#f8f8f8);border:0.8px solid #e0e0e0;border-bottom-color:#cdcdcd;border-radius:2.8px;box-shadow:0 0.5px 0.8px rgba(0,0,0,0.12);background:#fafafa;"></div>
<svg style="left:459.5px;top:226.2px" width="12" height="6" viewBox="0 0 12 6"><path d="M2.6,0.6 H10.6 Q11.3,0.6 11.3,1.3 V4.7 Q11.3,5.4 10.6,5.4 H2.6 L0.6,3 Z" fill="none" stroke="#a2a2a2" stroke-width="0.95"/></svg>
<div style="left:482.9px;top:222.8px;width:74.9px;height:12.8px;background:linear-gradient(#ffffff,#f8f8f8);border:0.8px solid #e0e0e0;border-bottom-color:#cdcdcd;border-radius:2.8px;box-shadow:0 0.5px 0.8px rgba(0,0,0,0.12);"></div>
<svg style="left:494.5px;top:224.8px" width="9" height="9" viewBox="0 0 9 9"><circle cx="3.6" cy="3.6" r="2.5" fill="none" stroke="#6a6a6a" stroke-width="1"/><path d="M5.5,5.5 L8,8" stroke="#6a6a6a" stroke-width="1.1"/></svg>
<span class="t" style="left:506.30px;top:223.43px;font-size:9.2px;line-height:12px;color:#b4b4b4;font-weight:400;transform:scaleX(0.9511);">Search</span>
<div style="left:102.7px;top:240px;width:127.6px;height:106px;background:#e3e3e3;border-right:0.7px solid #d0d0d0;"></div>
<div style="left:230.3px;top:240px;width:331.7px;height:106px;background:#ffffff;"></div>
<span class="t" style="left:108.40px;top:245.00px;font-size:7.6px;line-height:10px;color:#6b6b6b;font-weight:700;transform:scaleX(0.9122);">Favorites</span>
<div style="left:102.7px;top:271.2px;width:127.3px;height:14.3px;background:#b3b7bb;"></div>
<span class="t" style="left:129.90px;top:256.73px;font-size:9.2px;line-height:12px;color:#262626;font-weight:400;transform:scaleX(1.0261);-webkit-text-stroke:0.22px #262626;">Recents</span>
<span class="t" style="left:129.90px;top:272.33px;font-size:9.2px;line-height:12px;color:#1a1a1a;font-weight:400;transform:scaleX(0.9787);-webkit-text-stroke:0.4px #1a1a1a;">Desktop</span>
<span class="t" style="left:129.90px;top:288.03px;font-size:9.2px;line-height:12px;color:#262626;font-weight:400;transform:scaleX(0.9684);-webkit-text-stroke:0.22px #262626;">Documents</span>
<span class="t" style="left:129.90px;top:303.43px;font-size:9.2px;line-height:12px;color:#262626;font-weight:400;transform:scaleX(0.9890);-webkit-text-stroke:0.22px #262626;">Applications</span>
<span class="t" style="left:129.90px;top:319.03px;font-size:9.2px;line-height:12px;color:#262626;font-weight:400;transform:scaleX(0.9570);-webkit-text-stroke:0.22px #262626;">Downloads</span>
<span class="t" style="left:129.90px;top:334.83px;font-size:9.2px;line-height:12px;color:#262626;font-weight:400;transform:scaleX(0.9591);-webkit-text-stroke:0.22px #262626;">iCloud Drive</span>
<svg style="left:113px;top:255px" width="16" height="92" viewBox="0 0 16 92">
<g fill="none" stroke="#6c6c6c" stroke-width="0.9">
 <rect x="3" y="3.4" width="9" height="6.8" rx="1.2"/><path d="M2.4,9.2 H12.6 V11.6 Q12.6,12.4 11.8,12.4 H3.2 Q2.4,12.4 2.4,11.6Z" fill="#6c6c6c"/><path d="M4.6,5.2 H10.4 M4.6,7 H10.4" stroke-width="0.6"/>
</g>
<rect x="2.3" y="18.6" width="10.8" height="8" rx="1" fill="#55585c" stroke="#3e4144" stroke-width="0.8"/><rect x="3.6" y="20" width="8.2" height="4.6" fill="#7d8186"/><path d="M2.6,27.6 H12.8" stroke="#3e4144" stroke-width="0.9"/>
<g fill="none" stroke="#6c6c6c" stroke-width="0.85">
 <path d="M5.4,34.6 H10.2 L12.4,36.8 V44 H5.4Z"/><path d="M3.4,36.6 V42.2 H5.2 M3.4,36.6 H5.2" /><path d="M7,38.6 H10.8 M7,40.4 H10.8 M7,42.2 H10.8" stroke-width="0.55"/>
 <path d="M2.2,59.4 L7.6,49.4 L13,59.4 M4,56 H11.2 M2.6,53.4 Q7.6,50.6 12.6,55.6" stroke-width="0.9"/>
</g>
<circle cx="7.6" cy="70" r="5.2" fill="#5c5c5c"/><path d="M7.6,66.9 V72.4 M5.2,70.3 L7.6,72.8 L10,70.3" fill="none" stroke="#ececec" stroke-width="1.3"/>
<path d="M4.4,89.6 Q1.6,89.6 1.6,87.2 Q1.6,85.2 3.7,84.8 Q3.9,82 6.8,82 Q8.9,82 9.7,83.9 Q12.9,83.6 13.3,86.6 Q13.5,89.6 10.8,89.6Z" fill="none" stroke="#6c6c6c" stroke-width="0.9"/>
</svg>
<svg style="left:249.6px;top:249.6px" width="40" height="30" viewBox="0 0 40 30"><path d="M0.5,2.6 Q0.5,0.6 2.5,0.6 H12.6 Q13.8,0.6 14.6,1.6 L16.6,4 H37.5 Q39.5,4 39.5,6 V26.8 Q39.5,28.8 37.5,28.8 H2.5 Q0.5,28.8 0.5,26.8Z" fill="#5fb4e8"/><path d="M0.5,7 Q0.5,5.6 2,5.6 H38 Q39.5,5.6 39.5,7 V26.8 Q39.5,28.8 37.5,28.8 H2.5 Q0.5,28.8 0.5,26.8Z" fill="#78c6f0"/></svg>
<span class="t" style="left:253.45px;top:287.26px;font-size:8.6px;line-height:11px;color:#1c1c1c;font-weight:700;transform:scaleX(0.9290);">Desktop</span>
<span class="t" style="left:248.20px;top:296.76px;font-size:8.6px;line-height:11px;color:#1c1c1c;font-weight:700;transform:scaleX(0.8975);">Documents</span>
<span class="t" style="left:255.40px;top:306.81px;font-size:7.2px;line-height:9px;color:#4f86d6;font-weight:400;transform:scaleX(1.0158);">47 items</span>
<div style="left:329.6px;top:246.4px;width:27.3px;height:37.2px;background:#fff;border:0.7px solid #d3d3d3;box-shadow:0 0.5px 1.5px rgba(0,0,0,0.25);"></div>
<svg style="left:332.2px;top:249px" width="22.2" height="32" viewBox="0 0 22.2 32"><defs><filter id="tb"><feGaussianBlur stdDeviation="0.55"/></filter><clipPath id="tc"><rect width="22.2" height="32"/></clipPath></defs>
<g clip-path="url(#tc)"><rect width="22.2" height="32" fill="#bdd3e6"/><g filter="url(#tb)">
<path d="M-1,-1 H9 Q9.5,3 6.5,5.5 L-1,7.5Z" fill="#8a958c"/><path d="M16,-1 H24 V11 Q21,12 19.5,6Z" fill="#879288"/>
<path d="M15.2,7.5 L12.6,13 L17.8,13Z M12,13 H18.6 V18 H12Z" fill="#f2f2f0"/>
<path d="M18.6,14 H23 V20 H17 V17Z" fill="#ecece9"/><path d="M18.6,18 H24 V26 H18Z" fill="#a3ae9c"/>
<rect x="-1" y="17.5" width="14" height="10" fill="#e4e6e6"/><rect x="13" y="23" width="11" height="5" fill="#d3c5bb"/><rect x="15.6" y="24.5" width="3" height="3.5" fill="#badad6"/>
<rect x="-1" y="27.5" width="25" height="2.2" fill="#dcdcd8"/><rect x="-1" y="29.4" width="25" height="4" fill="#a9bb9b"/></g></g></svg>
<span class="t" style="left:312.60px;top:287.26px;font-size:8.6px;line-height:11px;color:#3a3a3a;font-weight:400;transform:scaleX(0.9612);">Karthika Gupta –</span>
<span class="t" style="left:309.20px;top:296.86px;font-size:8.6px;line-height:11px;color:#3a3a3a;font-weight:400;transform:scaleX(0.9806);">Original Image.jpg</span>
<span class="t" style="left:321.00px;top:306.91px;font-size:7.2px;line-height:9px;color:#93b3e2;font-weight:400;">3,840 × 5,760</span>
<div style="left:102.7px;top:346px;width:459.3px;height:22.8px;background:#ececec;border-top:0.8px solid #cfcfcf;border-radius:0 0 4.5px 4.5px;"></div>
<div style="left:108.4px;top:353.6px;width:8.4px;height:8.4px;background:#fff;border:0.8px solid #c6c6c6;border-radius:1.8px;"></div>
<span class="t" style="left:119.60px;top:351.83px;font-size:9.2px;line-height:12px;color:#222;font-weight:400;transform:scaleX(0.9822);-webkit-text-stroke:0.22px #222;">Hide extension</span>
<div style="left:185px;top:351.8px;width:63.4px;height:11.8px;background:linear-gradient(#ffffff,#f8f8f8);border:0.8px solid #e0e0e0;border-bottom-color:#cdcdcd;border-radius:2.8px;box-shadow:0 0.5px 0.8px rgba(0,0,0,0.12);border-radius:2.8px;"></div>
<span class="t" style="left:194.55px;top:351.83px;font-size:9.2px;line-height:12px;color:#222;font-weight:400;transform:scaleX(0.9471);-webkit-text-stroke:0.22px #222;">New Folder</span>
<div style="left:448.7px;top:352px;width:51.2px;height:12px;background:linear-gradient(#ffffff,#f8f8f8);border:0.8px solid #e0e0e0;border-bottom-color:#cdcdcd;border-radius:2.8px;box-shadow:0 0.5px 0.8px rgba(0,0,0,0.12);border-radius:2.8px;"></div>
<span class="t" style="left:459.80px;top:352.03px;font-size:9.2px;line-height:12px;color:#1a1a1a;font-weight:400;transform:scaleX(1.0137);-webkit-text-stroke:0.25px #1a1a1a;">Cancel</span>
<div style="left:505.9px;top:352px;width:51.6px;height:12px;background:linear-gradient(#62aefb,#2f86f6 55%,#1d74ee);border:0.7px solid #2a77e4;border-radius:2.8px;"></div>
<span class="t" style="left:520.70px;top:352.03px;font-size:9.2px;line-height:12px;color:#ffffff;font-weight:400;transform:scaleX(0.9785);-webkit-text-stroke:0.2px #fff;">Open</span>
</div></body></html>
